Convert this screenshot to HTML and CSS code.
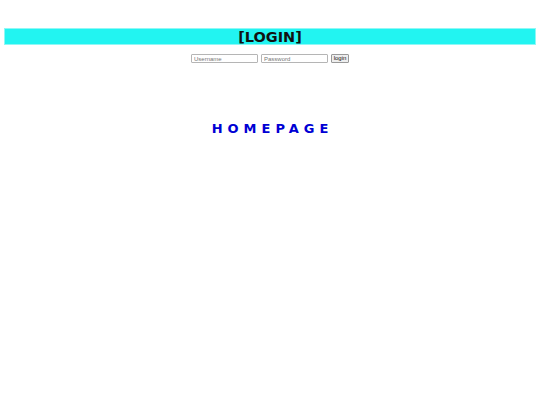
FILE: index.html
```html
<!DOCTYPE html>
<html>
<head>
<meta charset="utf-8">
<link rel="stylesheet" href="styles.css">
</head>
<body>
<header class="bar"><h1 class="title">[LOGIN]</h1></header>
<form class="login">
  <input class="field" type="text" placeholder="Username">
  <input class="field" type="password" placeholder="Password">
  <button class="btn" type="button">login</button>
</form>
<main class="home"><h2 class="home-title">HOMEPAGE</h2></main>
</body>
</html>
```
FILE: styles.css
```css
html, body { margin: 0; padding: 0; background: #fff; }
body { padding: 28px 4px 0; font-family: "DejaVu Sans", sans-serif; }
.bar {
  height: 17px;
  background: #22f4f1;
  box-shadow: inset 0 0 0 1px #8ef8f6;
  display: flex;
  align-items: center;
  justify-content: center;
}
.title {
  margin: 0;
  font-size: 14.5px;
  font-weight: bold;
  line-height: 17px;
  color: #111;
  padding-top: 1px;
}
.login {
  display: flex;
  justify-content: center;
  gap: 3px;
  margin-top: 9px;
}
.field {
  box-sizing: border-box;
  width: 67px;
  height: 9px;
  padding: 0 2px;
  border: 1px solid #b5b5b5;
  border-radius: 1px;
  font-family: "Liberation Sans", sans-serif;
  font-size: 6px;
  line-height: 7px;
  color: #333;
}
.field::placeholder { color: #777; }
.btn {
  box-sizing: border-box;
  width: 18px;
  height: 9px;
  padding: 0;
  border: 1px solid #999;
  border-radius: 1px;
  background: #eee;
  font-family: "Liberation Sans", sans-serif;
  font-size: 6px;
  line-height: 7px;
  color: #111;
}
.home { display: flex; justify-content: center; margin-top: 58px; }
.home-title {
  margin: 0;
  font-family: "DejaVu Sans", sans-serif;
  font-size: 13px;
  font-weight: bold;
  letter-spacing: 5px;
  color: #0000d4;
  line-height: 16px;
  padding-left: 5px;
}
```
